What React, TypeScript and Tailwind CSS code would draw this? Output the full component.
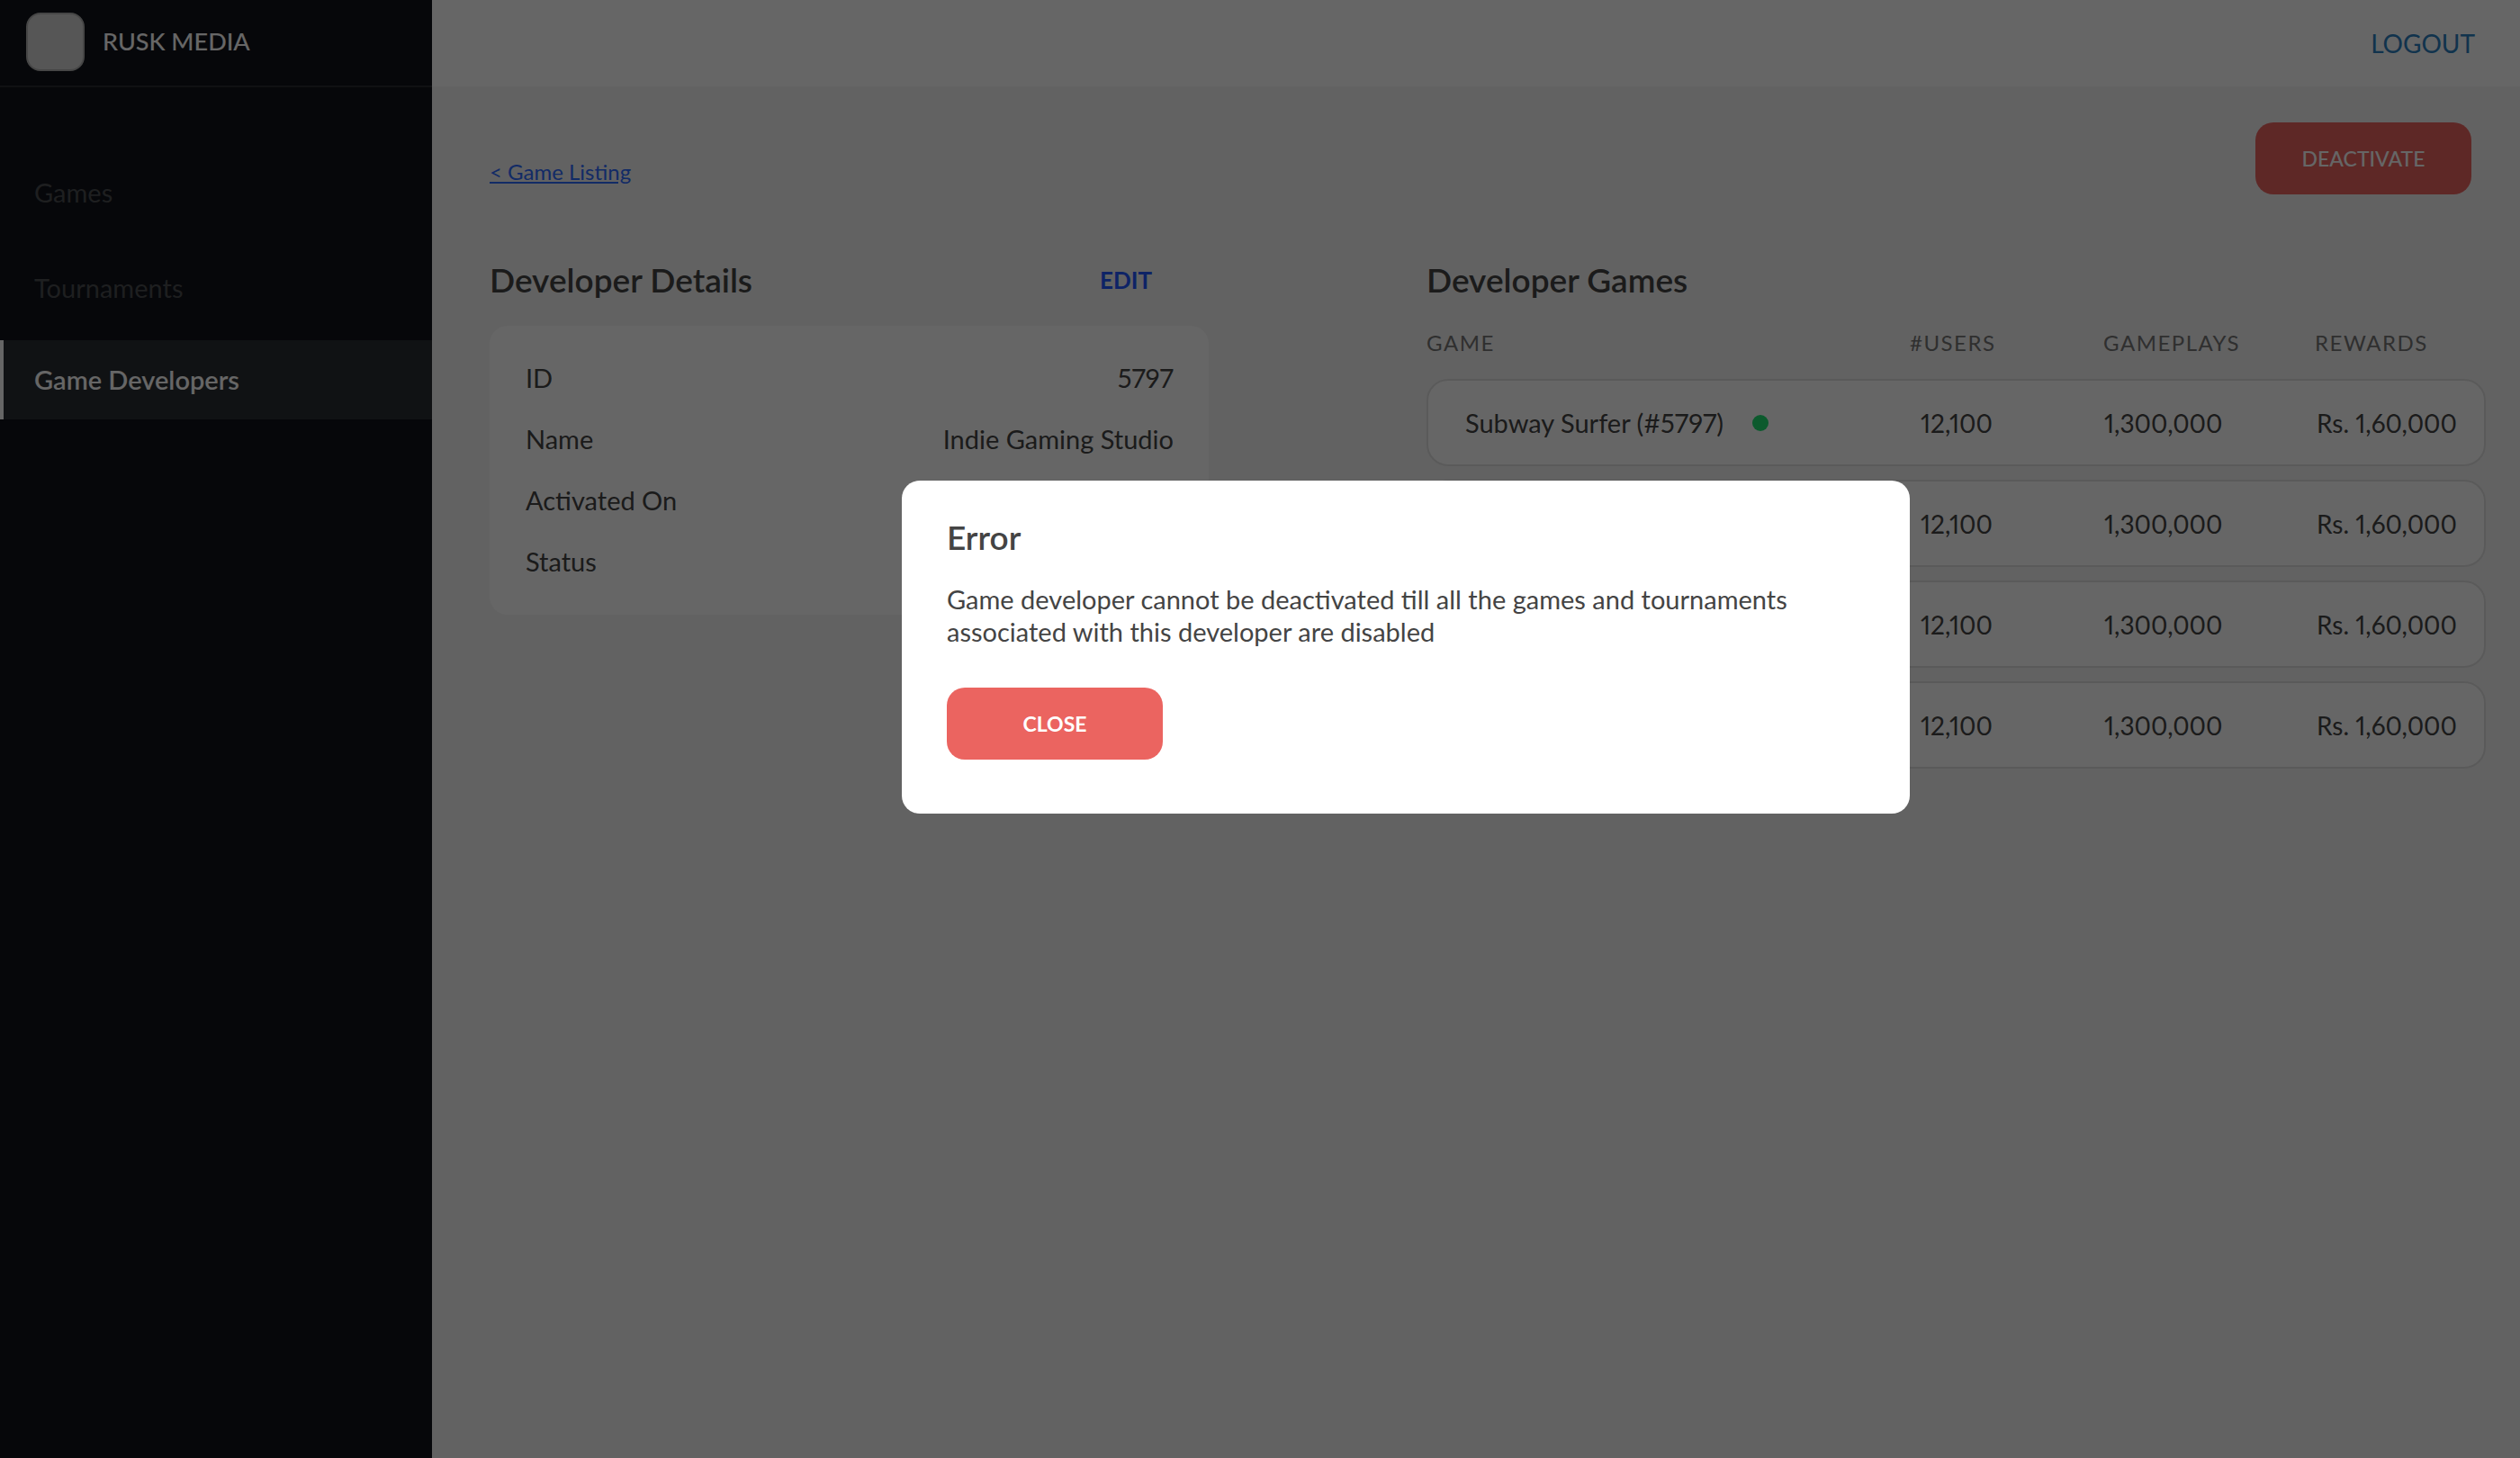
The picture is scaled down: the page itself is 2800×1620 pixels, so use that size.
import React from 'react';

// names of the lower rows sit behind the dialog, so only the first one is shown
const games = [
  { name: 'Subway Surfer (#5797)', live: true },
  { name: '', live: false },
  { name: '', live: false },
  { name: '', live: false },
];

const details = [
  ['ID', '5797'],
  ['Name', 'Indie Gaming Studio'],
  ['Activated On', ''],
  ['Status', ''],
];

function Sidebar() {
  return (
    <aside className="w-[480px] shrink-0 bg-[#0f1219] min-h-screen">
      <div className="h-[97px] flex items-center pl-[29px] pb-[3px] border-b-2 border-[#2a2c30]">
        <div className="w-[65px] h-[65px] rounded-[16px] bg-[#d6d6d6] border-2 border-[#b0b0b0]" />
        <span className="ml-[20px] text-[27px] font-medium text-white">RUSK MEDIA</span>
      </div>
      <nav className="pt-[73px] text-[29px]">
        <div className="h-[88px] flex items-center pl-[38px] text-[#4b4e52]">Games</div>
        <div className="h-[88px] mt-[18px] flex items-center pl-[38px] text-[#4b4e52]">Tournaments</div>
        <div className="h-[88px] mt-[14px] flex items-center pl-[34px] border-l-4 border-white bg-[#2a2d32] text-white font-semibold">
          Game Developers
        </div>
      </nav>
    </aside>
  );
}

function DeveloperDetails() {
  return (
    <div className="w-[799px] shrink-0">
      <div className="h-[48px] flex items-center justify-between pr-[63px]">
        <h2 className="text-[37px] font-semibold text-[#444]">Developer Details</h2>
        <a className="text-[26px] font-bold text-[#2458ff]">EDIT</a>
      </div>
      <div className="mt-[27px] rounded-[20px] bg-white pl-[40px] pr-[39px] pt-[24px] pb-[25px]">
        {details.map(([label, value]) => (
          <div key={label} className="h-[68px] flex items-center justify-between text-[29px] text-[#444] proportional-nums">
            <span>{label}</span>
            <span>{value}</span>
          </div>
        ))}
      </div>
    </div>
  );
}

function DeveloperGames() {
  return (
    <div className="flex-1">
      <h2 className="h-[48px] flex items-center text-[37px] font-semibold text-[#444]">Developer Games</h2>
      <div className="mt-[28px] h-[30px] grid grid-cols-[537px_215px_235px_1fr] items-center text-[24px] tracking-[1.5px] text-[#777]">
        <span>GAME</span>
        <span>#USERS</span>
        <span>GAMEPLAYS</span>
        <span>REWARDS</span>
      </div>
      <div className="mt-[28px] flex flex-col gap-[15px]">
        {games.map((game, i) => (
          <div
            key={i}
            className="h-[97px] pl-[41px] pr-[10px] grid grid-cols-[506px_204px_236px_1fr] items-center rounded-[24px] border-2 border-[#e2e2e2] bg-white text-[28px] text-[#444] proportional-nums whitespace-nowrap"
          >
            <div className="flex items-center">
              <span className="text-[29px]">{game.name}</span>
              {game.live && <span className="ml-[32px] w-[18px] h-[18px] rounded-full bg-[#1ee072]" />}
            </div>
            <span>12,100</span>
            <span>1,300,000</span>
            <span>Rs. 1,60,000</span>
          </div>
        ))}
      </div>
    </div>
  );
}

function ErrorModal() {
  return (
    <div className="fixed inset-0 bg-black/60">
      <div className="absolute left-[1002px] top-[534px] w-[1120px] h-[370px] rounded-[20px] bg-white pl-[50px] pt-[39px]">
        <h3 className="h-[48px] flex items-center text-[37px] font-semibold text-[#444]">Error</h3>
        <p className="mt-[27px] w-[1000px] text-[29px] leading-[36px] text-[#444]">
          Game developer cannot be deactivated till all the games and tournaments associated with this developer are disabled
        </p>
        <button className="mt-[44px] w-[240px] h-[80px] rounded-[20px] bg-[#eb6460] text-[23px] font-bold text-white">
          CLOSE
        </button>
      </div>
    </div>
  );
}

export default function App() {
  return (
    <div className="min-h-screen flex bg-[#f5f5f5] font-['Lato',sans-serif]">
      <Sidebar />
      <main className="flex-1">
        <header className="h-[96px] bg-white flex items-center justify-end pr-[50px]">
          <a className="text-[28px] text-[#2c80c0]">LOGOUT</a>
        </header>
        <div className="pl-[64px] pr-[38px] pt-[40px]">
          <div className="flex items-start justify-between pr-[16px]">
            <a className="mt-[37px] text-[24px] text-[#2f6bff] underline">&lt; Game Listing</a>
            <button className="w-[240px] h-[80px] rounded-[20px] bg-[#eb6460] text-[23px] font-medium text-white">
              DEACTIVATE
            </button>
          </div>
          <div className="mt-[71px] flex gap-[242px]">
            <DeveloperDetails />
            <DeveloperGames />
          </div>
        </div>
      </main>
      <ErrorModal />
    </div>
  );
}
